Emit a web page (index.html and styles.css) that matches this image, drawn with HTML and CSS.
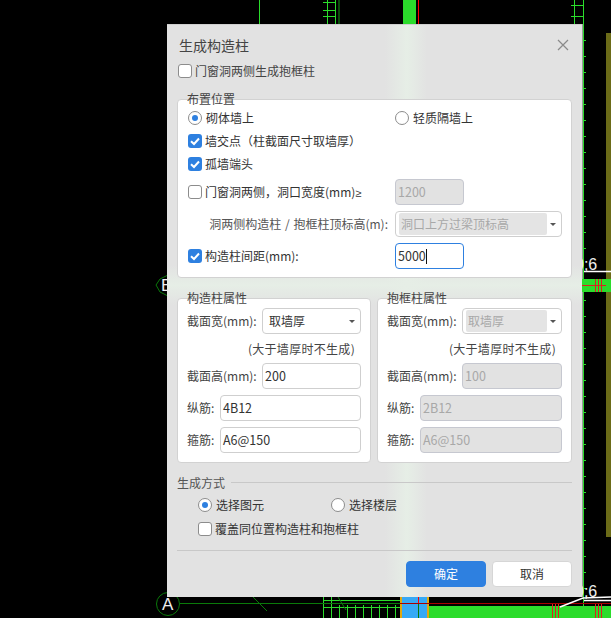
FILE: index.html
```html
<!DOCTYPE html>
<html lang="zh">
<head>
<meta charset="utf-8">
<title>生成构造柱</title>
<link rel="stylesheet" href="styles.css">
</head>
<body>
<svg class="cad" width="611" height="618" viewBox="0 0 611 618">
  <g stroke="#2bdc2b" fill="none" shape-rendering="crispEdges">
    <path d="M259.5 0V24M327.5 0V24M335.5 0V24M323 2.5H336M323 10.5H336M323 16.5H336"/>
    <path d="M574.5 0V24M583.5 0V618M571 5.5H584M571 16.5H584"/>
    <path d="M582 40.5h4M582 56.5h4M582 72.5h4M582 88.5h4M582 104.5h4M582 120.5h4M582 136.5h4M582 152.5h4M582 168.5h4M582 184.5h4M582 200.5h4M582 216.5h4M582 232.5h4M582 248.5h4M582 300.5h4M582 316.5h4M582 332.5h4M582 348.5h4M582 364.5h4M582 380.5h4M582 396.5h4M582 412.5h4M582 428.5h4M582 444.5h4M582 460.5h4M582 476.5h4M582 492.5h4M582 508.5h4M582 524.5h4M582 540.5h4M582 556.5h4M582 572.5h4M582 588.5h4"/>
    <path d="M323 600.5H400M323 607.5H400M323.5 597V618M331.5 597V618M339.5 605V618M347.5 605V618M355.5 605V618M363.5 605V618M371.5 605V618M379.5 605V618M387.5 605V618M395.5 605V618"/>
  </g>
  <path d="M339 0V24" stroke="#0a4a0a" stroke-width="2"/>
  <rect x="403" y="0" width="13" height="24" fill="#2bdc2b"/>
  <path d="M418.5 0V24" stroke="#ff0000"/>
  <path d="M582.5 24V597" stroke="#999"/>
  <rect x="606" y="33" width="5" height="504" fill="#6b6b18"/>
  <rect x="582" y="279" width="29" height="13" fill="#2bdc2b"/>
  <path d="M582 285.5H606M595.5 279V292M598.5 279V292M601.5 279V292" stroke="#e02020"/>
  <path d="M584 271.5H611M584 600.5H611" stroke="#fff" stroke-width="1.5"/>
  <text class="cad-text" x="575" y="270">0;6</text>
  <text class="cad-text" x="575" y="597">0;6</text>
  <g fill="none" stroke="#0a7a0a">
    <path d="M167 275.5L160 279L156 285L160 292L167 295.5"/>
    <circle cx="168" cy="604" r="11.5"/>
    <path d="M180 603.5H400M253 597L267 611M338 597L346 610"/>
  </g>
  <text class="cad-letter" x="161" y="291">B</text>
  <text class="cad-letter" x="162" y="610">A</text>
  <rect x="400" y="597" width="29" height="21" fill="#e0a810"/>
  <rect x="402" y="597" width="25" height="21" fill="#36a9f5"/>
  <path d="M418.5 597V618" stroke="#0a7a0a"/>
  <path d="M418.5 597V604" stroke="#ff0000"/>
  <rect x="429" y="606" width="182" height="12" fill="#2bdc2b"/>
  <path d="M400 603.5H611" stroke="#a80000"/>
  <path d="M552.5 604V618M555.5 604V618M558.5 604V618M595.5 604V618M598.5 604V618M601.5 604V618" stroke="#e02020"/>
  <path d="M560 607L583 598L611 597" stroke="#fff" stroke-width="1.5" fill="none"/>
</svg>

<div class="dialog">
  <header class="dialog-head">
    <span class="dialog-title">生成构造柱</span>
    <svg class="close" width="12" height="12" viewBox="0 0 12 12"><path d="M1 1L11 11M11 1L1 11" stroke="#8a8a8a" stroke-width="1.2" fill="none"/></svg>
  </header>

  <label class="row opt-top"><span class="check"></span><span>门窗洞两侧生成抱框柱</span></label>

  <section class="group group-place">
    <div class="group-title">布置位置</div>
    <div class="row row-radio">
      <span class="opt opt-a"><span class="radio on"></span><span>砌体墙上</span></span>
      <span class="opt"><span class="radio"></span><span>轻质隔墙上</span></span>
    </div>
    <div class="row mt9"><span class="check on"><svg width="14" height="14" viewBox="0 0 14 14"><path d="M3 7.2L6 10L11 4.5" stroke="#fff" stroke-width="2" fill="none"/></svg></span><span>墙交点（柱截面尺寸取墙厚）</span></div>
    <div class="row mt9"><span class="check on"><svg width="14" height="14" viewBox="0 0 14 14"><path d="M3 7.2L6 10L11 4.5" stroke="#fff" stroke-width="2" fill="none"/></svg></span><span>孤墙端头</span></div>
    <div class="row row-field mt8">
      <span class="lead"><span class="check"></span><span>门窗洞两侧，洞口宽度(mm)<span class="ge">≥</span></span></span>
      <span class="input small disabled">1200</span>
    </div>
    <div class="row row-field mt6">
      <span class="lead lead-right">洞两侧构造柱 / 抱框柱顶标高(m):</span>
      <span class="select wide disabled"><span class="select-value">洞口上方过梁顶标高</span><i class="caret"></i></span>
    </div>
    <div class="row row-field mt6">
      <span class="lead"><span class="check on"><svg width="14" height="14" viewBox="0 0 14 14"><path d="M3 7.2L6 10L11 4.5" stroke="#fff" stroke-width="2" fill="none"/></svg></span><span>构造柱间距(mm):</span></span>
      <span class="input small focus">5000<i class="text-caret"></i></span>
    </div>
  </section>

  <div class="props">
    <section class="group group-prop">
      <div class="group-title">构造柱属性</div>
      <div class="row row-field first">
        <span class="prop-label">截面宽(mm):</span>
        <span class="select grow"><span class="select-value plain">取墙厚</span><i class="caret"></i></span>
      </div>
      <div class="hint">(大于墙厚时不生成)</div>
      <div class="row row-field mt7">
        <span class="prop-label">截面高(mm):</span>
        <span class="input grow">200</span>
      </div>
      <div class="row row-field mt6">
        <span class="prop-label short">纵筋:</span>
        <span class="input grow">4B12</span>
      </div>
      <div class="row row-field mt6">
        <span class="prop-label short">箍筋:</span>
        <span class="input grow">A6@150</span>
      </div>
    </section>
    <section class="group group-prop">
      <div class="group-title">抱框柱属性</div>
      <div class="row row-field first">
        <span class="prop-label">截面宽(mm):</span>
        <span class="select grow disabled"><span class="select-value">取墙厚</span><i class="caret"></i></span>
      </div>
      <div class="hint">(大于墙厚时不生成)</div>
      <div class="row row-field mt7">
        <span class="prop-label">截面高(mm):</span>
        <span class="input grow disabled">100</span>
      </div>
      <div class="row row-field mt6">
        <span class="prop-label short">纵筋:</span>
        <span class="input grow disabled">2B12</span>
      </div>
      <div class="row row-field mt6">
        <span class="prop-label short">箍筋:</span>
        <span class="input grow disabled">A6@150</span>
      </div>
    </section>
  </div>

  <div class="mode-head"><span>生成方式</span><span class="mode-line"></span></div>
  <div class="row mode-row">
    <span class="opt opt-b"><span class="radio on"></span><span>选择图元</span></span>
    <span class="opt"><span class="radio"></span><span>选择楼层</span></span>
  </div>
  <div class="row mode-check"><span class="check"></span><span>覆盖同位置构造柱和抱框柱</span></div>

  <div class="divider"></div>
  <footer class="actions">
    <button class="btn primary" type="button">确定</button>
    <button class="btn" type="button">取消</button>
  </footer>
</div>
</body>
</html>
```

FILE: styles.css
```css
* { box-sizing: border-box; }
html, body { margin: 0; padding: 0; }
body {
  width: 611px;
  height: 618px;
  position: relative;
  overflow: hidden;
  background: #000;
  font-family: "Noto Sans CJK SC", "Noto Sans", sans-serif;
  font-size: 12px;
  line-height: 14px;
  color: #333;
}
.cad { position: absolute; left: 0; top: 0; display: block; }
.cad-text { fill: #eee; font: 16px "Liberation Sans", sans-serif; }
.cad-letter { fill: #eee; font: 17px "Liberation Sans", sans-serif; }

.dialog {
  position: absolute;
  left: 167px;
  top: 24px;
  width: 415px;
  height: 573px;
  padding: 0 10px;
  border-top: 1px solid #cfcfcf;
  background:
    linear-gradient(90deg, rgba(232,240,232,0) 218px, #e6eee6 240px, rgba(232,240,232,0) 260px),
    linear-gradient(180deg, rgba(232,240,232,0) 240px, #e6eee6 260px, rgba(232,240,232,0) 280px),
    #e2e2e2;
}
.dialog-head {
  height: 39px;
  display: flex;
  align-items: center;
  justify-content: space-between;
  padding: 0 3px 0 2px;
  color: #444;
}
.dialog-title { font-size: 14px; }
.close { display: block; }

.row { display: flex; align-items: center; height: 14px; }
.row-field { height: 26px; }
.mt6 { margin-top: 6px; }
.mt7 { margin-top: 7px; }
.mt8 { margin-top: 8px; }
.mt9 { margin-top: 9px; }
.opt-top { gap: 3px; margin-left: 1px; color: #444; }

.check {
  flex: none;
  width: 14px;
  height: 14px;
  margin-right: 3px;
  background: #fff;
  border: 1px solid #8c8c8c;
  border-radius: 3px;
  display: block;
}
.opt-top .check { margin-right: 0; }
.check.on { background: #2e80e0; border: 0; }
.check svg { display: block; }
.radio {
  flex: none;
  width: 14px;
  height: 14px;
  margin-right: 4px;
  background: #fff;
  border: 1px solid #8c8c8c;
  border-radius: 50%;
  display: flex;
  align-items: center;
  justify-content: center;
}
.radio.on::after {
  content: "";
  width: 6px;
  height: 6px;
  border-radius: 50%;
  background: #2e80e0;
}
.opt { display: flex; align-items: center; }
.opt-a { width: 207px; }
.opt-b { width: 133px; }

.group {
  background: #fff;
  border: 1px solid #d2d2d2;
  border-radius: 4px;
  padding: 0 9px 8px 10px;
}
.group-title { height: 14px; margin: -8px 0 0 -1px; color: #444; }
.group-place { margin-top: 21px; height: 179px; }
.row-radio { margin-top: 5px; }

.lead { width: 207px; flex: none; display: flex; align-items: center; white-space: nowrap; }
.lead-right { justify-content: flex-end; padding-right: 7px; color: #555; word-spacing: 1px; }
.ge { font-family: "Liberation Sans", sans-serif; font-size: 11px; }
.input, .select {
  display: flex;
  align-items: center;
  height: 26px;
  background: #fff;
  border: 1px solid #cfcfcf;
  border-radius: 4px;
  color: #333;
}
.input { padding: 0 2px; font-size: 12.5px; }
.small { width: 69px; }
.wide { width: 167px; }
.grow { flex: 1; min-width: 0; }
.input.disabled { background: #e2e2e2; border-color: #c6c8d0; color: #a8a8a8; }
.input.focus { border-color: #2e80e0; }
.text-caret { display: block; width: 1px; height: 15px; background: #111; }
.select { padding: 1px 14px 1px 3px; position: relative; }
.select-value { flex: 1; height: 22px; line-height: 22px; padding-left: 2px; border-radius: 2px; font-size: 12px; }
.select-value.plain { padding-left: 3px; }
.select.disabled { color: #a8a8a8; }
.select.disabled .select-value { background: #e4e4e4; }
.caret {
  position: absolute;
  right: 5px;
  top: 11px;
  width: 0;
  height: 0;
  border: 3px solid transparent;
  border-top: 3px solid #555;
  border-bottom: 0;
}

.props { display: flex; gap: 6px; margin-top: 20px; }
.group-prop { width: 195px; height: 165px; color: #444; padding-left: 9px; }
.group-prop:first-child { width: 194px; }
.group-prop .group-title { margin-left: 0; }
.first { margin-top: 3px; }
.prop-label { flex: none; width: 75px; white-space: nowrap; }
.prop-label.short { width: 33px; }
.hint { height: 14px; margin-top: 8px; text-align: right; padding-right: 6px; letter-spacing: 0.3px; }

.mode-head { display: flex; align-items: center; gap: 6px; margin-top: 13px; color: #555; }
.mode-line { flex: 1; height: 1px; background: #c8c8c8; margin-top: -2px; }
.mode-row { margin: 8px 0 0 21px; }
.mode-check { margin: 10px 0 0 21px; }

.divider { height: 1px; background: #c8c8c8; margin-top: 14px; }
.actions { display: flex; justify-content: flex-end; gap: 6px; margin-top: 10px; }
.btn {
  width: 80px;
  height: 26px;
  padding: 0;
  border: 1px solid #d6d6d6;
  border-radius: 4px;
  background: #fff;
  color: #333;
  font: 12px/14px "Noto Sans CJK SC", sans-serif;
}
.btn.primary { background: #2e80e0; border-color: #2e80e0; color: #fff; }
```
